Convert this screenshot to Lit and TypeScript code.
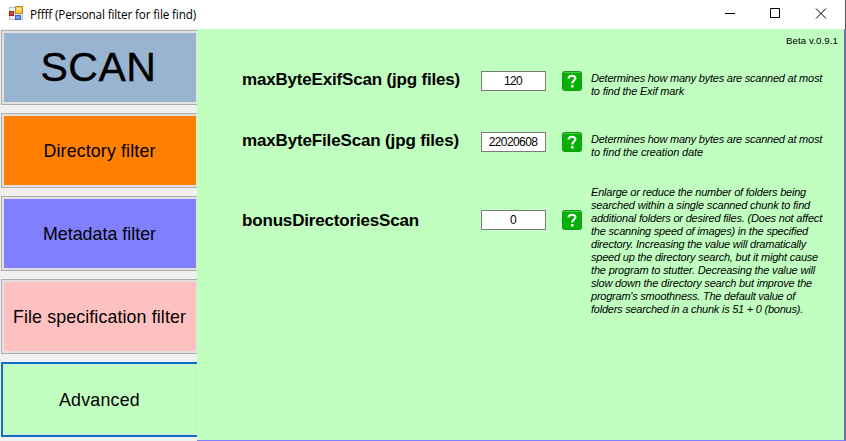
import { LitElement, html, css } from "lit";
import { customElement, property } from "lit/decorators.js";

/** One line of text, tracked so that it fills the given width. */
@customElement("fit-text")
class FitText extends LitElement {
  @property({ type: Number }) width = 0;
  @property() text = "";
  static styles = css`
    :host { display: block; white-space: pre; }
    span { display: inline-block; }
  `;
  render() {
    return html`<span>${this.text}</span>`;
  }
  updated() {
    const s = this.renderRoot.querySelector("span") as HTMLElement;
    s.style.letterSpacing = "0px";
    const natural = s.getBoundingClientRect().width;
    s.style.letterSpacing = `${(this.width - natural) / this.text.length}px`;
  }
}

type Line = [string, number];

const TABS: { cls: string; text: string; width: number }[] = [
  { cls: "scan", text: "SCAN", width: 116 },
  { cls: "dir", text: "Directory filter", width: 112 },
  { cls: "meta", text: "Metadata filter", width: 113 },
  { cls: "spec", text: "File specification filter", width: 173 },
  { cls: "adv", text: "Advanced", width: 81 },
];

const OPTIONS: { cls: string; label: Line; value: string; lines: Line[] }[] = [
  {
    cls: "r1",
    label: ["maxByteExifScan (jpg files)", 218],
    value: "120",
    lines: [
      ["Determines how many bytes are scanned at most", 231],
      ["to find the Exif mark", 93],
    ],
  },
  {
    cls: "r2",
    label: ["maxByteFileScan (jpg files)", 217],
    value: "22020608",
    lines: [
      ["Determines how many bytes are scanned at most", 231],
      ["to find the creation date", 112],
    ],
  },
  {
    cls: "r3",
    label: ["bonusDirectoriesScan", 177],
    value: "0",
    lines: [
      ["Enlarge or reduce the number of folders being", 215],
      ["searched within a single scanned chunk to find", 219],
      ["additional folders or desired files. (Does not affect", 231],
      ["the scanning speed of images) in the specified", 217],
      ["directory. Increasing the value will dramatically", 215],
      ["speed up the directory search, but it might cause", 227],
      ["the program to stutter. Decreasing the value will", 224],
      ["slow down the directory search but improve the", 221],
      ["program's smoothness. The default value of", 204],
      ["folders searched in a chunk is 51 + 0 (bonus).", 212],
    ],
  },
];

@customElement("app-root")
class AppRoot extends LitElement {
  static styles = css`
    :host {
      display: flex;
      flex-direction: column;
      width: 846px;
      height: 441px;
      overflow: hidden;
      background: #f0f0f0;
      color: #000;
      font-family: "Liberation Sans", Arial, sans-serif;
    }
    * { box-sizing: border-box; }
    svg { display: block; flex: none; }
    .bar {
      display: flex;
      align-items: center;
      flex: none;
      height: 29px;
      padding: 0 0 2px 9px;
      background: #fff;
      border-right: 1px solid #555;
    }
    .title { margin-left: 6px; font: 11.7px/16px "Open Sans", "Noto Sans", sans-serif; }
    .controls { display: flex; margin-left: auto; margin-right: 3px; }
    .body { display: flex; flex: 1; min-height: 0; }
    .tabs {
      display: flex;
      flex-direction: column;
      gap: 8px;
      width: 197px;
      padding: 1px 0 0 1px;
    }
    .tab {
      display: flex;
      align-items: center;
      justify-content: center;
      flex: none;
      height: 75px;
      border: 1px solid #adadad;
      border-right: 0;
      box-shadow: inset 2px 2px #e1e1e1, inset -1px -2px #e1e1e1;
      font-size: 17.8px;
      line-height: 20px;
    }
    .scan {
      background: #99b4d1;
      font-size: 41px;
      line-height: 46px;
      padding: 0 2px 2px 0;
      -webkit-text-stroke: 0.4px #000;
    }
    .dir { background: #ff8000; }
    .meta { background: #8080ff; }
    .spec { background: #ffc0c0; }
    .adv {
      background: #c0ffc0;
      border: 2px solid #0f6fc5;
      border-right: 0;
      box-shadow: inset 1px 1px #cdebdc, inset -1px -1px #cdebdc;
      padding-right: 1px;
    }
    .panel {
      flex: 1;
      display: flex;
      flex-direction: column;
      background: #c0ffc0;
      border-right: 2px solid #6a70b8;
      border-bottom: 1px solid #8080ff;
    }
    .version {
      display: flex;
      justify-content: flex-end;
      height: 23px;
      padding: 6px 6px 0 0;
      font-size: 9.7px;
      line-height: 12px;
    }
    .row {
      display: grid;
      grid-template-columns: 239px 65px 20px 240px;
      align-items: start;
      padding-left: 45px;
    }
    .r1 { height: 61px; margin-top: 19px; }
    .r2 { height: 61px; }
    .r3 { margin-top: 17px; }
    .label { font-size: 17px; line-height: 20px; font-weight: 700; margin-top: -1px; }
    .r3 .label { margin-top: 1px; }
    .value {
      height: 20px;
      border: 1px solid #7a7a7a;
      background: #fff;
      text-align: center;
      font-size: 12px;
      line-height: 19px;
      letter-spacing: -0.6px;
      padding-right: 1px;
    }
    .help { margin-left: 16px; }
    .note {
      margin: 1px 0 0 25px;
      font-size: 11px;
      line-height: 13px;
      font-style: italic;
    }
    .r3 .note { margin-top: -24px; }
  `;

  render() {
    return html`
      <header class="bar">
        <svg width="15" height="15" viewBox="0 0 15 15">
          <rect x=".5" y="1.500" width="13" height="12" fill="#eef0f4" stroke="#c4c4c4" />
          <rect x="6.500" y=".5" width="7" height="7" fill="#f7cb45" stroke="#b58a2c" />
          <rect x="8" y="2" width="4" height="2" fill="#ffe88e" />
          <rect x=".5" y="5.500" width="4" height="4" fill="#d8483c" stroke="#93241f" />
          <rect x="6.500" y="9.500" width="5" height="4" fill="#6ba0ee" stroke="#3a66bd" />
        </svg>
        <fit-text class="title" .width=${166} .text=${"Pffff (Personal filter for file find)"}></fit-text>
        <svg class="controls" width="117" height="27" viewBox="0 0 117 27" fill="none" stroke="#000">
          <path d="M0 13.500h10M45.500 8.500h9v9h-9z" />
          <path d="M91 8.500l10 10M101 8.500l-10 10" />
        </svg>
      </header>
      <div class="body">
        <nav class="tabs">
          ${TABS.map(
            (t) => html`<div class="tab ${t.cls}"><fit-text .width=${t.width} .text=${t.text}></fit-text></div>`
          )}
        </nav>
        <main class="panel">
          <div class="version"><fit-text .width=${52} .text=${"Beta v.0.9.1"}></fit-text></div>
          ${OPTIONS.map(
            (o) => html`<section class="row ${o.cls}">
              <fit-text class="label" .width=${o.label[1]} .text=${o.label[0]}></fit-text>
              <div class="value">${o.value}</div>
              <svg class="help" width="20" height="20" viewBox="0 0 20 20">
                <rect x=".5" y=".5" width="19" height="19" rx="2" fill="#06b006" stroke="#129a12" />
                <path d="M2 1.500h16" stroke="#4cc94c" />
                <path d="M6.600 7.500C6.600 3.900 13.500 3.800 13.400 7.300C13.300 9.500 10.200 9.700 10.200 12.600" fill="none" stroke="#fff" stroke-width="2.200" />
                <rect x="9" y="14" width="2.500" height="2.500" fill="#fff" />
              </svg>
              <div class="note">
                ${o.lines.map(([text, w]) => html`<fit-text .width=${w} .text=${text}></fit-text>`)}
              </div>
            </section>`
          )}
        </main>
      </div>
    `;
  }
}
